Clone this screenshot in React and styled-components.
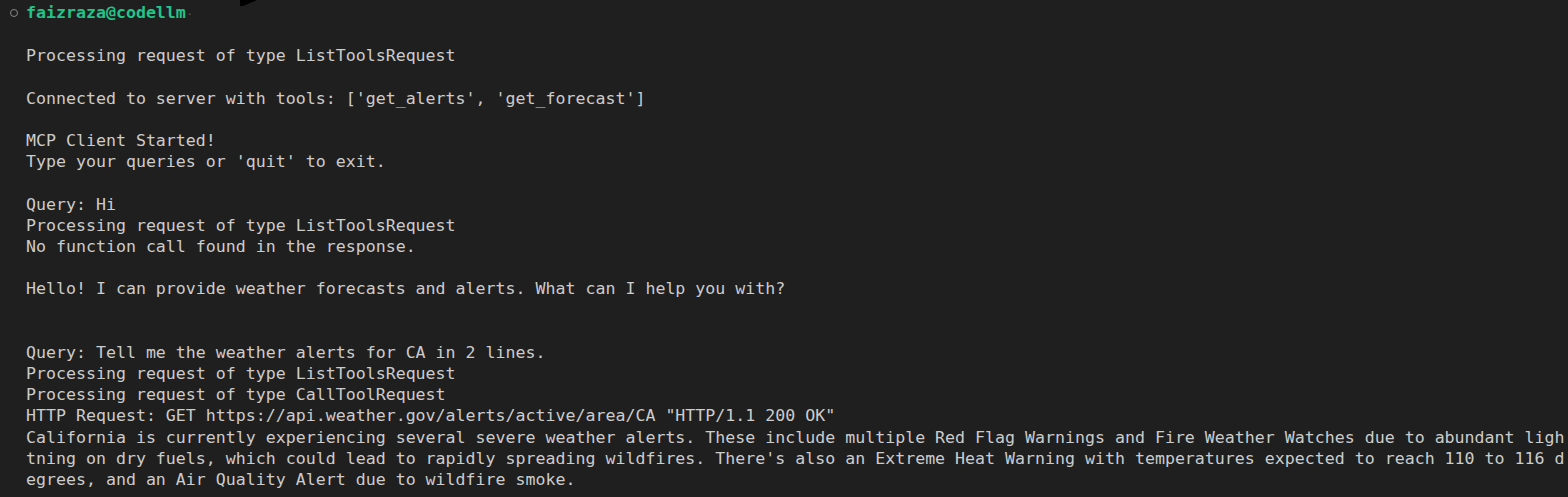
import React from "react";
import styled, { createGlobalStyle } from "styled-components";

const lines = [
  "Processing request of type ListToolsRequest",
  "",
  "Connected to server with tools: ['get_alerts', 'get_forecast']",
  "",
  "MCP Client Started!",
  "Type your queries or 'quit' to exit.",
  "",
  "Query: Hi",
  "Processing request of type ListToolsRequest",
  "No function call found in the response.",
  "",
  "Hello! I can provide weather forecasts and alerts. What can I help you with?",
  "",
  "",
  "Query: Tell me the weather alerts for CA in 2 lines.",
  "Processing request of type ListToolsRequest",
  "Processing request of type CallToolRequest",
  'HTTP Request: GET https://api.weather.gov/alerts/active/area/CA "HTTP/1.1 200 OK"',
  "California is currently experiencing several severe weather alerts. These include multiple Red Flag Warnings and Fire Weather Watches due to abundant ligh",
  "tning on dry fuels, which could lead to rapidly spreading wildfires. There's also an Extreme Heat Warning with temperatures expected to reach 110 to 116 d",
  "egrees, and an Air Quality Alert due to wildfire smoke.",
];

function App() {
  return (
    <>
      <GlobalStyle />
      <Terminal>
        {/* mouse pointer tip poking in from above */}
        <Pointer width="18" height="6" viewBox="0 0 18 6">
          <polygon points="0,0 17,0 3,6 0,6" fill="#000" />
        </Pointer>
        <Prompt>
          <StatusRing />
          <User>faizraza@codellm</User>
          <Trail>·</Trail>
        </Prompt>
        <Output>
          {lines.map((text, i) => (
            <Line key={i}>{text}</Line>
          ))}
        </Output>
      </Terminal>
    </>
  );
}

const GlobalStyle = createGlobalStyle`
  html, body {
    margin: 0;
    padding: 0;
    background: #1f1f1f;
  }
  body {
    font-family: "DejaVu Sans Mono", "Liberation Mono", monospace;
  }
`;

const Terminal = styled.div`
  position: relative;
  width: 1568px;
  height: 497px;
  overflow: hidden;
  background: #1f1f1f;
  font-family: "DejaVu Sans Mono", "Liberation Mono", monospace;
  font-size: 16.6px;
  line-height: 21.2px;
  color: #cccccc;
`;

const Pointer = styled.svg`
  position: absolute;
  left: 240px;
  top: 0;
`;

const Prompt = styled.div`
  display: flex;
  align-items: center;
  height: 21.2px;
  padding-top: 2px;
  padding-left: 10px;
`;

const StatusRing = styled.span`
  box-sizing: border-box;
  width: 8px;
  height: 8px;
  border-radius: 50%;
  border: 1.6px solid #8a8a8a;
  margin-right: 8px;
`;

const User = styled.span`
  color: #23c48a;
  font-weight: bold;
  white-space: pre;
`;

const Trail = styled.span`
  color: #4f6a5e;
  font-size: 10px;
  margin-left: 1px;
  margin-top: 3px;
`;

const Output = styled.div`
  padding-top: 22px;
  padding-left: 26px;
`;

const Line = styled.div`
  height: 21.2px;
  white-space: pre;
`;

export default App;
